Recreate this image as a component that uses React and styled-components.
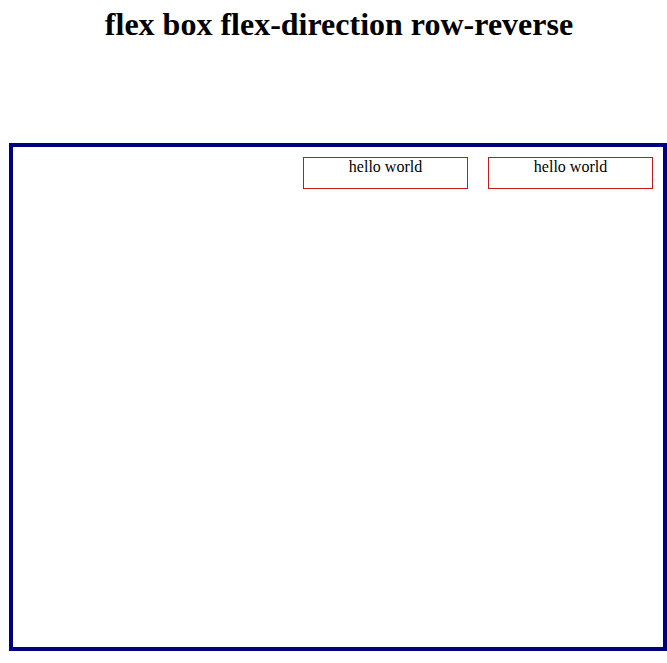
import React from 'react'
import styled, { createGlobalStyle } from 'styled-components'

const GlobalStyle = createGlobalStyle`
  body {
    margin: 0;
    background: #fff;
    font-family: "Liberation Serif", "Times New Roman", serif;
    color: #000;
  }
`;

function App() {
  const items = ['hello world', 'hello world']

  return (
    <PageStyled>
      <GlobalStyle />
      <h1>flex box flex-direction row-reverse</h1>
      <FlexContainer>
        {items.map((text, i) => (
          <FlexItem key={i}>{text}</FlexItem>
        ))}
      </FlexContainer>
    </PageStyled>
  )
}

const PageStyled = styled.div`
  padding-left: 9px;
  h1{
      font-size: 32px;
      font-weight: bold;
      text-align: center;
      margin: 6px 0 0 0;
      height: 137px;
      padding-left: 2px;
  }
`;

const FlexContainer = styled.div`
  display: flex;
  flex-direction: row-reverse;
  align-items: flex-start;
  width: 650px;
  height: 500px;
  border: 4px solid #000080;
`;

const FlexItem = styled.div`
  width: 163px;
  height: 30px;
  margin: 10px 10px 10px 10px;
  border: 1px solid #c21a1a;
  text-align: center;
  font-size: 16px;
`;

export default App
